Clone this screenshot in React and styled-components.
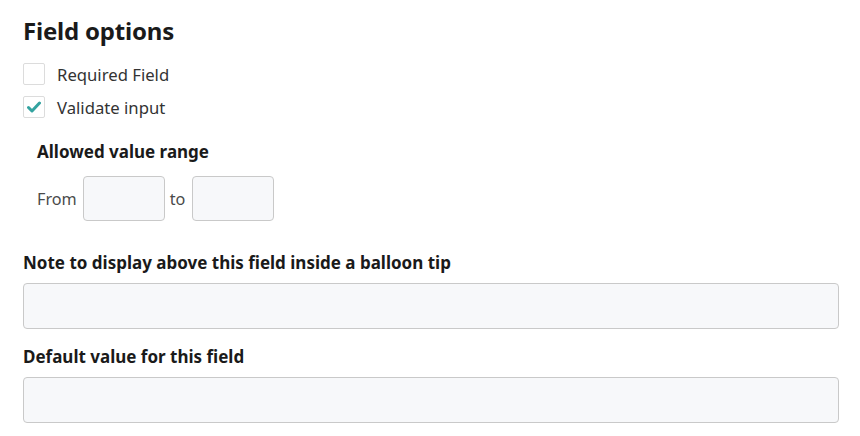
import React from 'react';
import styled, { createGlobalStyle } from 'styled-components';

const GlobalStyle = createGlobalStyle`
  html, body {
    margin: 0;
    padding: 0;
    background: #fff;
  }
  body {
    font-family: "Noto Sans", "Open Sans", "Liberation Sans", sans-serif;
    color: #222;
  }
`;

const Page = styled.div`
  width: 860px;
  height: 436px;
  padding: 12px 21px 0 23px;
  box-sizing: border-box;
  display: flex;
  flex-direction: column;
`;

const Title = styled.h2`
  margin: 0;
  font-size: 24px;
  font-weight: 700;
  line-height: 38px;
  color: #1a1a1a;
  letter-spacing: -0.2px;
`;

const CheckList = styled.div`
  display: flex;
  flex-direction: column;
  gap: 11px;
  margin-top: 13px;
`;

const CheckRow = styled.label`
  display: flex;
  align-items: center;
  gap: 12px;
  font-size: 16.7px;
  color: #333;
  height: 22px;
`;

const Box = styled.span`
  width: 20px;
  height: 20px;
  border: 1px solid #dcdcdc;
  border-radius: 2px;
  background: #fff;
  display: flex;
  align-items: center;
  justify-content: center;
  flex-shrink: 0;
`;

const Range = styled.div`
  padding-left: 14px;
  margin-top: 23px;
`;

const Label = styled.div`
  font-size: 17px;
  font-weight: 700;
  color: #1a1a1a;
  line-height: 22px;
`;

const RangeRow = styled.div`
  display: flex;
  align-items: center;
  margin-top: 13px;
  font-size: 16.2px;
  color: #4a4a4a;
`;

const Word = styled.span`
  margin-left: ${p => p.$gap || 0}px;
`;

const SmallInput = styled.div`
  width: 80px;
  height: 43px;
  border: 1px solid #c9c9c9;
  border-radius: 4px;
  background: #f7f8fa;
  margin-left: ${p => p.$gap}px;
`;

const Field = styled.div`
  margin-top: ${p => p.$top}px;
`;

const WideInput = styled.div`
  height: 44px;
  margin-top: 9px;
  border: 1px solid #c9c9c9;
  border-radius: 4px;
  background: #f7f8fa;
`;

function Check({ checked, children }) {
  return (
    <CheckRow>
      <Box>
        {checked && (
          <svg width="14" height="12" viewBox="0 0 14 12">
            <path d="M1.5 6.5 L5 10 L12.5 2" fill="none" stroke="#33a3a0" strokeWidth="3" strokeLinecap="round" strokeLinejoin="round" />
          </svg>
        )}
      </Box>
      {children}
    </CheckRow>
  );
}

export default function App() {
  return (
    <>
      <GlobalStyle />
      <Page>
        <Title>Field options</Title>
        <CheckList>
          <Check>Required Field</Check>
          <Check checked>Validate input</Check>
        </CheckList>
        <Range>
          <Label>Allowed value range</Label>
          <RangeRow>
            <Word>From</Word>
            <SmallInput $gap={6} />
            <Word $gap={5}>to</Word>
            <SmallInput $gap={7} />
          </RangeRow>
        </Range>
        <Field $top={31}>
          <Label>Note to display above this field inside a balloon tip</Label>
          <WideInput />
        </Field>
        <Field $top={17}>
          <Label>Default value for this field</Label>
          <WideInput />
        </Field>
      </Page>
    </>
  );
}
